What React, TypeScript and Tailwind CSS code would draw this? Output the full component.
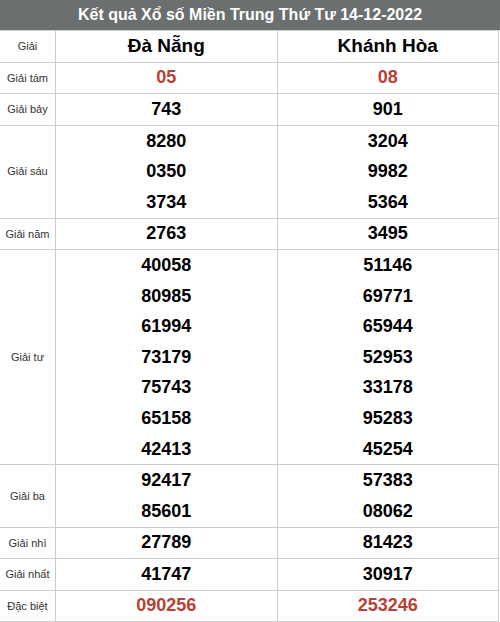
import React from "react";

const rows: { label: string; a: string[]; b: string[]; red?: boolean }[] = [
  { label: "Giải tám", a: ["05"], b: ["08"], red: true },
  { label: "Giải bảy", a: ["743"], b: ["901"] },
  { label: "Giải sáu", a: ["8280", "0350", "3734"], b: ["3204", "9982", "5364"] },
  { label: "Giải năm", a: ["2763"], b: ["3495"] },
  {
    label: "Giải tư",
    a: ["40058", "80985", "61994", "73179", "75743", "65158", "42413"],
    b: ["51146", "69771", "65944", "52953", "33178", "95283", "45254"],
  },
  { label: "Giải ba", a: ["92417", "85601"], b: ["57383", "08062"] },
  { label: "Giải nhì", a: ["27789"], b: ["81423"] },
  { label: "Giải nhất", a: ["41747"], b: ["30917"] },
  { label: "Đặc biệt", a: ["090256"], b: ["253246"], red: true },
];

function Nums({ list, red }: { list: string[]; red?: boolean }) {
  return (
    <div className="flex-1 flex flex-col border-l border-[#cccccc]">
      {list.map((n) => (
        <div
          key={n}
          className={`h-[30.6px] flex items-center justify-center text-[18px] font-bold ${
            red ? "text-[#bb3f35]" : "text-black"
          }`}
        >
          {n}
        </div>
      ))}
    </div>
  );
}

export default function App() {
  return (
    <div className="w-[500px] bg-white font-['Liberation_Sans',Arial,sans-serif]">
      <div className="h-[30px] bg-[#6b6f6f] flex items-center justify-center text-white font-bold text-[16px]">
        Kết quả Xổ số Miền Trung Thứ Tư 14-12-2022
      </div>
      <div className="w-[499px] border-r border-b border-t border-[#cccccc]">
        <div className="flex border-b border-[#cccccc]">
          <div className="w-[55px] h-[30.6px] flex items-center justify-center text-[11px] text-[#333333]">
            Giải
          </div>
          <div className="flex-1 border-l border-[#cccccc] flex items-center justify-center text-[19px] font-bold text-black">
            Đà Nẵng
          </div>
          <div className="flex-1 border-l border-[#cccccc] flex items-center justify-center text-[19px] font-bold text-black">
            Khánh Hòa
          </div>
        </div>
        {rows.map((r, i) => (
          <div
            key={r.label}
            className={`flex ${i < rows.length - 1 ? "border-b border-[#cccccc]" : ""}`}
          >
            <div className="w-[55px] flex items-center justify-center text-[11px] text-[#333333] whitespace-nowrap">
              {r.label}
            </div>
            <Nums list={r.a} red={r.red} />
            <Nums list={r.b} red={r.red} />
          </div>
        ))}
      </div>
    </div>
  );
}
